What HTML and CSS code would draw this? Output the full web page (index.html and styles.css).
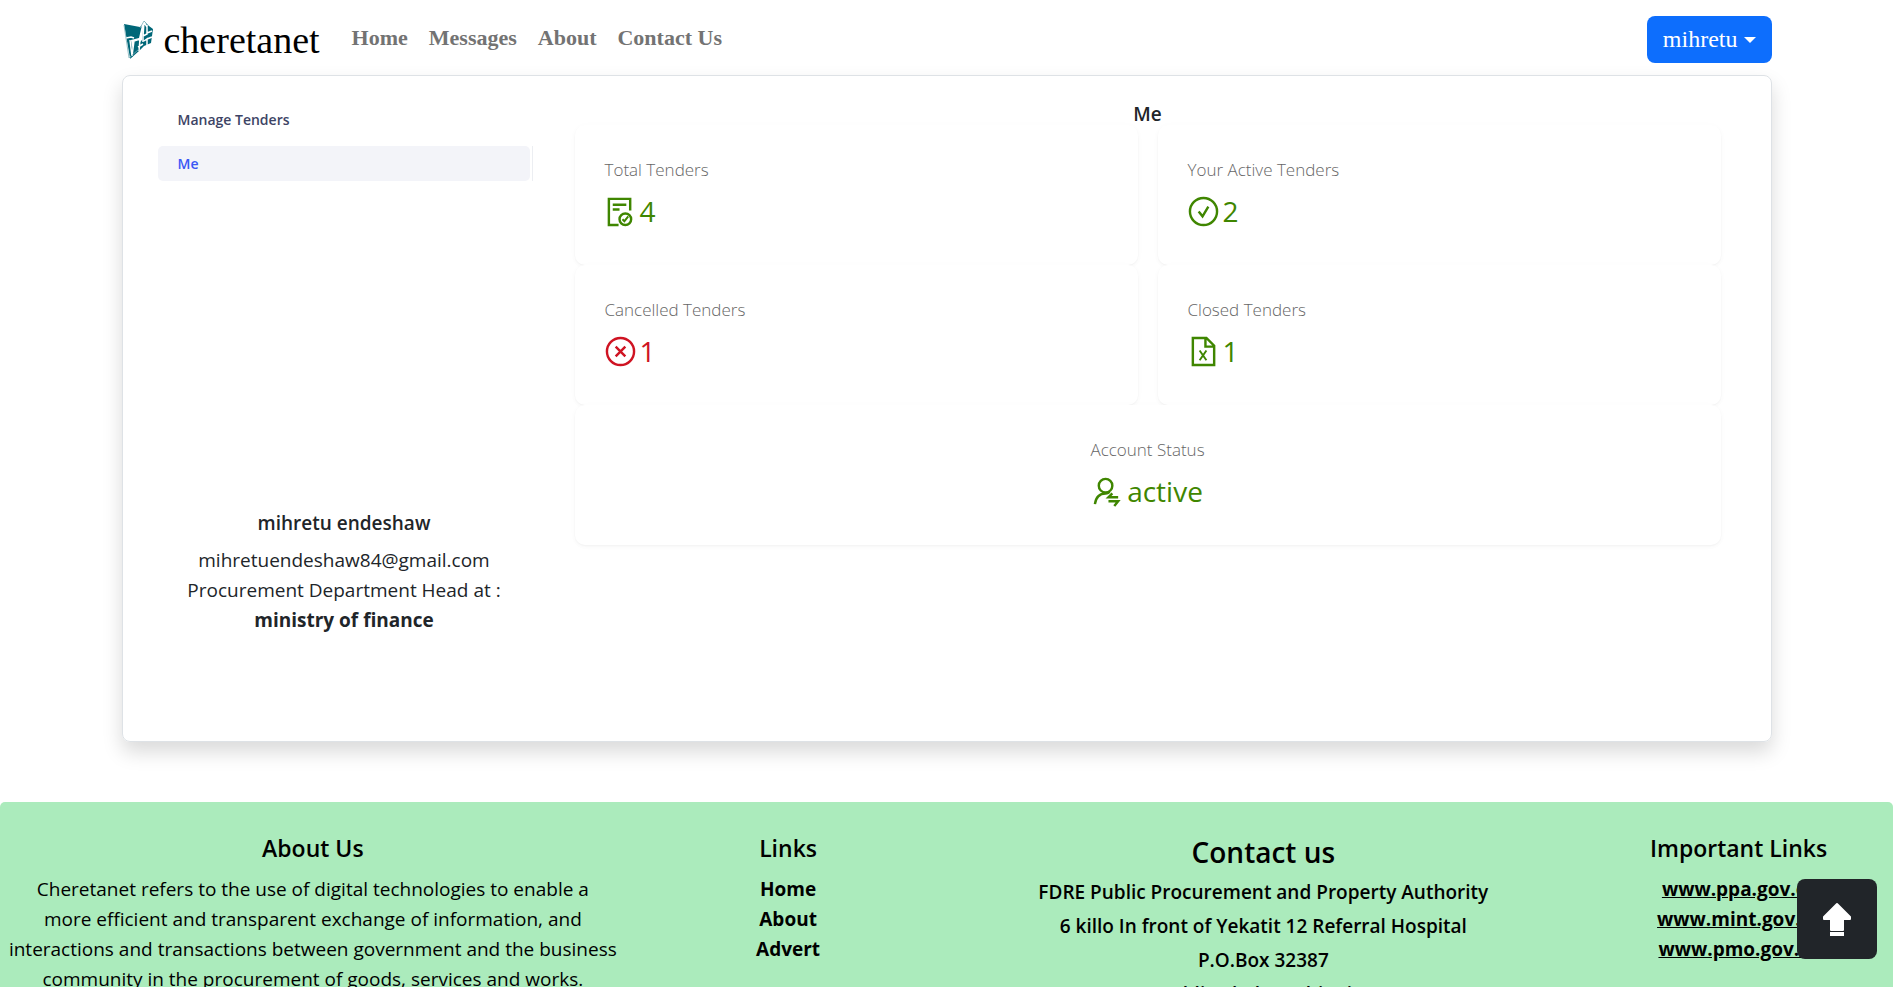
FILE: index.html
```html
<!DOCTYPE html>
<html lang="en">
<head>
<meta charset="utf-8">
<meta name="viewport" content="width=device-width, initial-scale=1">
<title>cheretanet</title>
<link rel="stylesheet" href="styles.css">
</head>
<body>
<header class="navbar container">
  <a class="brand" href="#">
    <svg class="brand-mark" viewBox="0 0 32 40" aria-hidden="true">
      <path fill="#006778" d="M2 4 18 7 20 5 17 18 9 20 11 36 8 38Z"/>
      <path fill="#006778" d="M22 1 27 6 31 9 29 23 22 26 17 31 8 39 12 21 17 19 17 23 20 20Z"/>
      <path fill="none" stroke="#fff" stroke-width="1.5" d="M4 18 9 17 12 18M20 7 22 2 21 16M8 20 10 36 12 21 18 19 17 31M21 22V16L25 14V5M22 2 25 7M25 13 30 11M25 19 30 17M22 21 25 19V25M16 27 21 24"/>
      <path fill="none" stroke="#7fb3bb" stroke-width="0.8" d="M18 8 22 1 26 5M2 5 7 38 17 29"/>
    </svg>
    <span class="brand-name">cheretanet</span>
  </a>
  <nav class="nav">
    <a href="#">Home</a>
    <a href="#">Messages</a>
    <a href="#">About</a>
    <a href="#">Contact Us</a>
  </nav>
  <button class="user-button" type="button">mihretu<span class="caret"></span></button>
</header>

<main class="panel container">
  <aside class="sidebar">
    <nav class="menu">
      <h2 class="menu-title">Manage Tenders</h2>
      <div class="menu-track"><a class="menu-item" href="#">Me</a></div>
    </nav>
    <div class="profile">
      <h3 class="profile-name">mihretu endeshaw</h3>
      <p>mihretuendeshaw84@gmail.com</p>
      <p>Procurement Department Head at :</p>
      <p><strong>ministry of finance</strong></p>
    </div>
  </aside>
  <section class="content">
    <h1 class="content-title">Me</h1>
    <div class="stats">
      <article class="stat">
        <h4 class="stat-label">Total Tenders</h4>
        <div class="stat-value good">
          <svg class="icon" viewBox="0 0 32 32" aria-hidden="true"><path d="M26 15V3H4V30H14M8 9H22M8 14H15"/><circle cx="21" cy="24" r="6"/><path stroke-width="2" d="m18 24 2 2 4-5"/></svg>
          <span>4</span>
        </div>
      </article>
      <article class="stat">
        <h4 class="stat-label">Your Active Tenders</h4>
        <div class="stat-value good">
          <svg class="icon" viewBox="0 0 32 32" aria-hidden="true"><circle cx="16" cy="16" r="14"/><path d="m11 16 4 5 6-10"/></svg>
          <span>2</span>
        </div>
      </article>
      <article class="stat">
        <h4 class="stat-label">Cancelled Tenders</h4>
        <div class="stat-value bad">
          <svg class="icon" viewBox="0 0 32 32" aria-hidden="true"><circle cx="16" cy="16" r="14"/><path d="m11 11 10 10M21 11 11 21"/></svg>
          <span>1</span>
        </div>
      </article>
      <article class="stat">
        <h4 class="stat-label">Closed Tenders</h4>
        <div class="stat-value good">
          <svg class="icon" viewBox="0 0 32 32" aria-hidden="true"><path d="M5 2H19L27 10V30H5ZM18 2V11H27"/><path stroke-width="2" d="M12 15 19 25M19 15 12 25"/></svg>
          <span>1</span>
        </div>
      </article>
      <article class="stat stat-wide">
        <h4 class="stat-label">Account Status</h4>
        <div class="stat-value good">
          <svg class="icon" viewBox="0 0 32 32" aria-hidden="true"><circle cx="14" cy="10" r="7"/><path d="M3 29C4 22 8 18 14 18Q17 18 18 16M27 22H17L21 18M17 26H27L23 31"/></svg>
          <span>active</span>
        </div>
      </article>
    </div>
  </section>
</main>

<footer class="footer">
  <div class="footer-grid">
    <section>
      <h3 class="footer-title">About Us</h3>
      <p>Cheretanet refers to the use of digital technologies to enable a<br>more efficient and transparent exchange of information, and<br>interactions and transactions between government and the business<br>community in the procurement of goods, services and works.</p>
    </section>
    <section>
      <h3 class="footer-title">Links</h3>
      <ul class="links">
        <li><a href="#">Home</a></li>
        <li><a href="#">About</a></li>
        <li><a href="#">Advert</a></li>
      </ul>
    </section>
    <section>
      <h3 class="footer-title large">Contact us</h3>
      <address class="address">
        <div>FDRE Public Procurement and Property Authority</div>
        <div>6 killo In front of Yekatit 12 Referral Hospital</div>
        <div>P.O.Box 32387</div>
        <div>Addis Ababa, Ethiopia</div>
      </address>
    </section>
    <section>
      <h3 class="footer-title">Important Links</h3>
      <ul class="links underlined">
        <li><a href="#">www.ppa.gov.et</a></li>
        <li><a href="#">www.mint.gov.et</a></li>
        <li><a href="#">www.pmo.gov.et</a></li>
      </ul>
    </section>
  </div>
</footer>

<button class="to-top" type="button" aria-label="Back to top">
  <svg viewBox="0 0 30 36" aria-hidden="true"><path stroke="#fff" stroke-width="2" stroke-linejoin="round" d="M15 3 28 16V18H21V29H9V18H2V16Z"/><path d="M8 31H22V35H8Z"/></svg>
</button>
</body>
</html>
```

FILE: styles.css
```css
* { box-sizing: border-box; }

body {
  margin: 0;
  height: 100vh;
  overflow: hidden;
  background: #fff;
  color: #212529;
  font-family: "Segoe UI", "Open Sans", "Noto Sans", sans-serif;
  font-size: 19px;
  line-height: 30px;
}

h1, h2, h3, h4, p, ul { margin: 0; padding: 0; }
a { color: inherit; text-decoration: none; }

.container {
  width: calc(100% - 32px);
  max-width: 1650px;
  margin: 0 auto;
}

.navbar {
  display: flex;
  align-items: center;
  height: 75px;
  padding-top: 4px;
  font-family: "Liberation Serif", serif;
}

.brand {
  display: flex;
  align-items: center;
  gap: 10px;
  color: #000;
}

.brand-mark { width: 32px; height: 40px; }
.brand-name { font-size: 38px; line-height: 48px; }

.nav {
  display: flex;
  gap: 21px;
  margin-left: 32px;
  padding-bottom: 4px;
  color: #737373;
  font-size: 22px;
  font-weight: 700;
}

.user-button {
  display: flex;
  align-items: center;
  gap: 6px;
  margin-left: auto;
  padding: 8px 16px;
  border: 0;
  border-radius: 8px;
  background: #0d6efd;
  color: #fff;
  font: 24px/31px "Liberation Serif", serif;
}

.caret {
  border: 6px solid transparent;
  border-top-color: #fff;
  border-bottom: 0;
}

.panel {
  display: grid;
  grid-template-columns: 410px 1fr;
  min-height: 667px;
  border: 1px solid #dee2e6;
  border-radius: 8px;
  box-shadow: 0 10px 20px rgba(0, 0, 0, 0.15);
}

.sidebar {
  display: flex;
  flex-direction: column;
  justify-content: space-between;
  padding: 28px 0 106px 35px;
}

.menu {
  font-size: 14px;
  font-weight: 600;
}

.menu-title {
  padding: 1px 20px 11px;
  color: #3d4465;
  font-size: 14px;
  font-weight: 600;
}

.menu-track {
  padding-right: 2px;
  border-right: 1px solid #eceef2;
}

.menu-item {
  display: block;
  padding: 3px 20px 2px;
  border-radius: 5px;
  background: #f3f4f9;
  color: #3a57f5;
}

.profile {
  padding-right: 2px;
  text-align: center;
}

.profile-name {
  margin-bottom: 7px;
  font-size: 19px;
  font-weight: 600;
}

.content { padding: 27px 50px 0 42px; }

.content-title {
  font-size: 19px;
  font-weight: 600;
  line-height: 22px;
  text-align: center;
}

.stats {
  display: grid;
  grid-template-columns: 1fr 1fr;
  column-gap: 20px;
}

.stat {
  height: 140px;
  padding: 30px;
  border-radius: 10px;
  background: #fff;
  box-shadow: 0 1px 2px rgba(0, 0, 0, 0.03), 0 1px 8px rgba(0, 0, 0, 0.02), 0 2px 5px rgba(0, 0, 0, 0.02);
}

.stat-wide {
  grid-column: 1 / -1;
  text-align: center;
}

.stat-label {
  margin-bottom: 4px;
  color: #666;
  font-size: 17px;
  font-weight: 300;
}

.stat-value {
  display: flex;
  align-items: center;
  gap: 4px;
  font-size: 28px;
  line-height: 45px;
}

.stat-wide .stat-value { justify-content: center; }
.good { color: #3f8600; }
.bad { color: #cf1322; }

.icon {
  width: 31px;
  height: 31px;
  fill: none;
  stroke: currentColor;
  stroke-width: 2.5;
}

.footer {
  margin-top: 60px;
  padding: 28px 0 60px;
  overflow: hidden;
  border-radius: 5px;
  background: #abebbc;
  color: #000;
  text-align: center;
}

.footer-grid {
  display: grid;
  grid-template-columns: 2fr 1fr 2fr 1fr;
  margin: 0 -4px;
}

.footer-grid section { padding: 0 8px; }

.footer-title {
  margin-bottom: 7px;
  font-size: 23px;
  font-weight: 600;
  line-height: 37px;
}

.footer-title.large {
  margin-bottom: 1px;
  font-size: 28px;
  line-height: 44px;
}

.links {
  list-style: none;
  font-weight: 700;
}

.underlined { text-decoration: underline; }

.address {
  font-style: normal;
  font-weight: 600;
  line-height: 34px;
}

.to-top {
  position: fixed;
  right: 16px;
  bottom: 28px;
  display: flex;
  align-items: center;
  justify-content: center;
  width: 80px;
  height: 80px;
  padding: 0;
  border: 0;
  border-radius: 8px;
  background: #212529;
}

.to-top svg {
  width: 30px;
  height: 36px;
  fill: #fff;
}
```
